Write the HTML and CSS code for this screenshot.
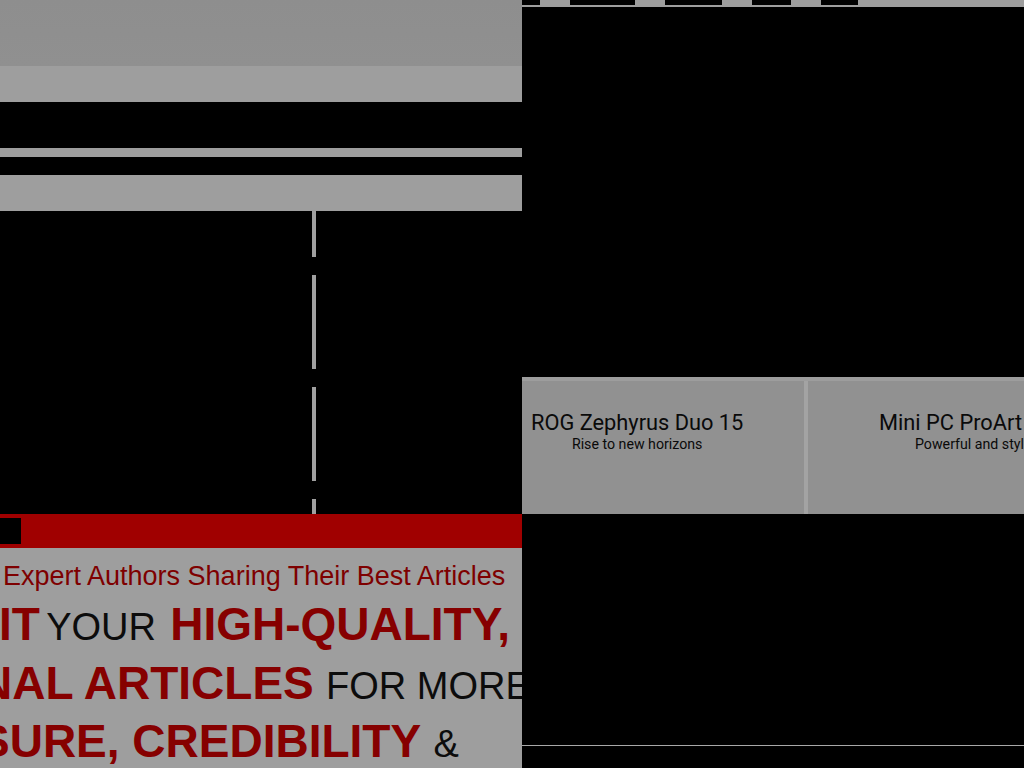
FILE: index.html
```html
<!DOCTYPE html>
<html lang="en">
<head>
<meta charset="utf-8">
<title>Articles</title>
<link rel="stylesheet" href="styles.css">
</head>
<body>
<div class="page">
  <div class="left">
    <div class="hdr"></div>
    <div class="band band-36"></div>
    <div class="blk blk-46"></div>
    <div class="band band-9"></div>
    <div class="blk blk-18"></div>
    <div class="band band-36"></div>
    <div class="media"><div class="vline"></div></div>
    <div class="redbar"><div class="sq"></div></div>
    <div class="banner">
      <div class="tagline">Expert Authors Sharing Their Best Articles</div>
      <div class="line l1"><span class="b">IT</span> <span class="r">YOUR</span> <span class="b">HIGH-QUALITY,</span></div>
      <div class="line l2"><span class="b">NAL ARTICLES</span> <span class="r">FOR MORE</span></div>
      <div class="line l3"><span class="b">SURE, CREDIBILITY</span> <span class="r">&amp;</span></div>
    </div>
  </div>
  <div class="right">
    <div class="nav">
      <span class="nb w18"></span>
      <span class="nb w65"></span>
      <span class="nb w57"></span>
      <span class="nb w39"></span>
      <span class="nb w37"></span>
    </div>
    <div class="hero"></div>
    <div class="cards">
      <div class="card c1">
        <div class="cap">
          <div class="ttl">ROG Zephyrus Duo 15</div>
          <div class="sub">Rise to new horizons</div>
        </div>
      </div>
      <div class="divider"></div>
      <div class="card c2">
        <div class="cap">
          <div class="ttl">Mini PC ProArt</div>
          <div class="sub">Powerful and stylish</div>
        </div>
      </div>
    </div>
    <div class="dark"></div>
    <div class="rule"></div>
    <div class="foot"></div>
  </div>
</div>
</body>
</html>
```

FILE: styles.css
```css
html, body {
  margin: 0;
  padding: 0;
  background: #000;
}
.page {
  display: flex;
  width: 1024px;
  height: 768px;
  overflow: hidden;
}
.left {
  width: 522px;
  flex: 0 0 522px;
  display: flex;
  flex-direction: column;
  overflow: hidden;
}
.right {
  width: 502px;
  flex: 0 0 502px;
  display: flex;
  flex-direction: column;
  overflow: hidden;
}
.hdr {
  height: 66px;
  background: linear-gradient(#8e8e8e, #909090);
}
.band { background: #9e9e9e; }
.band-36 { height: 36px; }
.band-9 { height: 9px; }
.blk { background: #000; }
.blk-46 { height: 46px; }
.blk-18 { height: 18px; }
.media {
  height: 303px;
  background: #000;
  display: flex;
}
.vline {
  margin-left: 312px;
  width: 4px;
  height: 100%;
  background-image: linear-gradient(to bottom, #a0a0a0 0 94px, transparent 94px);
  background-size: 4px 112px;
  background-repeat: repeat-y;
  background-position: 0 -48px;
}
.redbar {
  height: 34px;
  background: #a00000;
  display: flex;
  align-items: flex-start;
}
.sq {
  width: 21px;
  height: 26px;
  margin-top: 4px;
  background: #000;
}
.banner {
  flex: 1;
  background: #9e9e9e;
  font-family: "Liberation Sans", Arial, sans-serif;
  white-space: nowrap;
  overflow: hidden;
}
.tagline {
  font-size: 27px;
  color: #7e0000;
  padding-left: 3px;
  line-height: 31px;
  margin-top: 13px;
}
.line {
  height: 58px;
  line-height: 58px;
  font-size: 44px;
}
.l1 { margin-top: 3px; margin-left: -1px; }
.l1 .r { margin-left: -6px; margin-right: 2px; }
.l2 { margin-left: -21px; margin-top: 1px; }
.l3 { margin-left: -21px; }
.b {
  font-weight: 700;
  font-size: 46px;
  color: #860000;
}
.r {
  font-weight: 400;
  font-size: 38px;
  color: #0c0c0c;
}
.nav {
  height: 7px;
  background: #9e9e9e;
  display: flex;
  gap: 30px;
  align-items: flex-start;
}
.nb {
  display: block;
  height: 5px;
  background: #000;
}
.w18 { width: 18px; }
.w65 { width: 65px; }
.w57 { width: 57px; }
.w39 { width: 39px; }
.w37 { width: 37px; }
.hero {
  height: 370px;
  background: #000;
}
.cards {
  height: 137px;
  display: flex;
  background: #919191;
  border-top: 4px solid #9d9d9d;
  box-sizing: border-box;
}
.card {
  height: 100%;
  font-family: Roboto, "Liberation Sans", sans-serif;
  color: #0a0a0a;
  box-sizing: border-box;
  padding-top: 30px;
}
.c1 { width: 282px; flex: 0 0 282px; padding-left: 9px; }
.c2 { flex: 1; padding-left: 71px; }
.divider {
  width: 4px;
  flex: 0 0 4px;
  background: #a3a3a3;
}
.cap {
  display: inline-block;
  text-align: center;
}
.ttl {
  font-size: 21.8px;
  line-height: 24px;
  white-space: nowrap;
}
.sub {
  font-size: 14.2px;
  line-height: 18px;
  white-space: nowrap;
}
.c2 .cap { text-align: left; }
.c2 .sub { padding-left: 36px; }
.dark {
  height: 231px;
  background: #000;
}
.rule {
  height: 1px;
  background: #a8a8a8;
}
.foot {
  flex: 1;
  background: #000;
}
```
